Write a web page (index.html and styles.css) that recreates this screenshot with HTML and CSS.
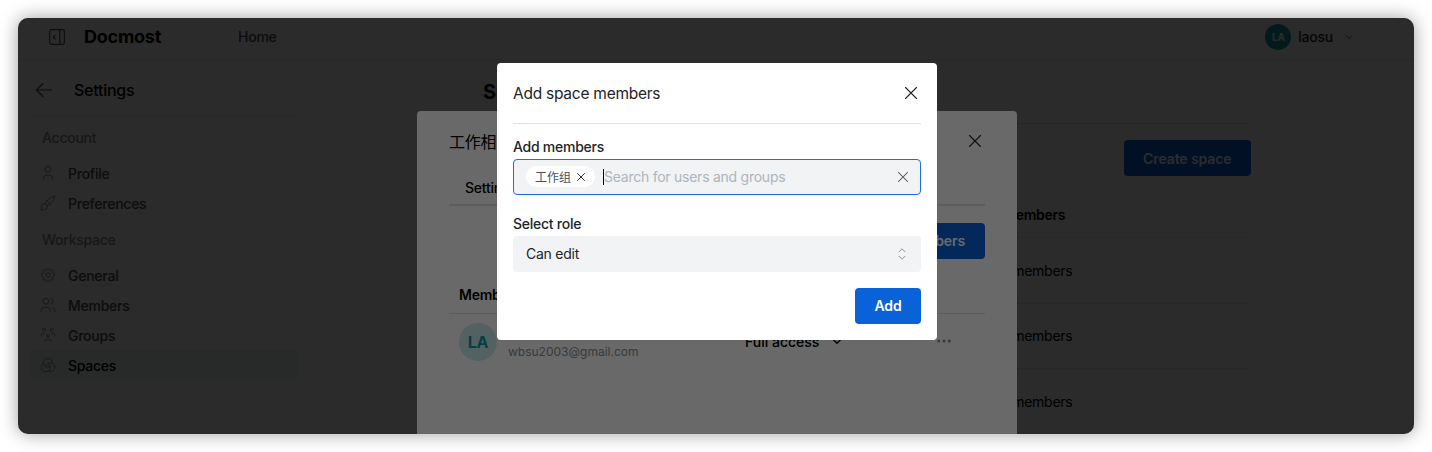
FILE: index.html
```html
<!DOCTYPE html>
<html lang="en">
<head>
<meta charset="utf-8">
<title>Docmost</title>
<link rel="stylesheet" href="styles.css">
</head>
<body>
<svg class="defs" aria-hidden="true">
  <symbol id="i-x" viewBox="0 0 24 24"><path d="M18 6L6 18M6 6l12 12"/></symbol>
  <symbol id="i-down" viewBox="0 0 24 24"><path d="M6 9l6 6l6 -6"/></symbol>
  <symbol id="i-sel" viewBox="0 0 24 24"><path d="M8 9l4 -4l4 4M16 15l-4 4l-4 -4"/></symbol>
  <symbol id="i-side" viewBox="0 0 24 24"><path d="M4 6a2 2 0 0 1 2 -2h12a2 2 0 0 1 2 2v12a2 2 0 0 1 -2 2h-12a2 2 0 0 1 -2 -2zM15 4v16M10 10l-2 2l2 2"/></symbol>
  <symbol id="i-back" viewBox="0 0 24 24"><path d="M5 12h14M5 12l6 6M5 12l6 -6"/></symbol>
  <symbol id="i-user" viewBox="0 0 24 24"><path d="M8 7a4 4 0 1 0 8 0a4 4 0 0 0 -8 0M6 21v-2a4 4 0 0 1 4 -4h4a4 4 0 0 1 4 4v2"/></symbol>
  <symbol id="i-brush" viewBox="0 0 24 24"><path d="M3 21v-4a4 4 0 1 1 4 4h-4M21 3a16 16 0 0 0 -12.8 10.2M21 3a16 16 0 0 1 -10.2 12.8M10.6 9a9 9 0 0 1 4.4 4.4"/></symbol>
  <symbol id="i-gear" viewBox="0 0 24 24"><path d="M10.325 4.317c.426 -1.756 2.924 -1.756 3.35 0a1.724 1.724 0 0 0 2.573 1.066c1.543 -.94 3.31 .826 2.37 2.37a1.724 1.724 0 0 0 1.065 2.572c1.756 .426 1.756 2.924 0 3.35a1.724 1.724 0 0 0 -1.066 2.573c.94 1.543 -.826 3.31 -2.37 2.37a1.724 1.724 0 0 0 -2.572 1.065c-.426 1.756 -2.924 1.756 -3.35 0a1.724 1.724 0 0 0 -2.573 -1.066c-1.543 .94 -3.31 -.826 -2.37 -2.37a1.724 1.724 0 0 0 -1.065 -2.572c-1.756 -.426 -1.756 -2.924 0 -3.35a1.724 1.724 0 0 0 1.066 -2.573c-.94 -1.543 .826 -3.31 2.37 -2.37c1 .608 2.296 .07 2.572 -1.065zM9 12a3 3 0 1 0 6 0a3 3 0 0 0 -6 0"/></symbol>
  <symbol id="i-users" viewBox="0 0 24 24"><path d="M5 7a4 4 0 1 0 8 0a4 4 0 1 0 -8 0M3 21v-2a4 4 0 0 1 4 -4h4a4 4 0 0 1 4 4v2M16 3.13a4 4 0 0 1 0 7.75M21 21v-2a4 4 0 0 0 -3 -3.85"/></symbol>
  <symbol id="i-group" viewBox="0 0 24 24"><path d="M10 13a2 2 0 1 0 4 0a2 2 0 0 0 -4 0M8 21v-1a2 2 0 0 1 2 -2h4a2 2 0 0 1 2 2v1M15 5a2 2 0 1 0 4 0a2 2 0 0 0 -4 0M17 10h2a2 2 0 0 1 2 2v1M5 5a2 2 0 1 0 4 0a2 2 0 0 0 -4 0M3 13v-1a2 2 0 0 1 2 -2h2"/></symbol>
  <symbol id="i-spaces" viewBox="0 0 24 24"><path d="M6.045 9.777a6 6 0 1 0 5.951 .023M11.997 20.196a6 6 0 1 0 -2.948 -5.97M17.95 9.785q .05 -.386 .05 -.785a6 6 0 1 0 -3.056 5.23"/></symbol>
  <symbol id="i-dots" viewBox="0 0 24 24"><path d="M4 12a1 1 0 1 0 2 0a1 1 0 1 0 -2 0M11 12a1 1 0 1 0 2 0a1 1 0 1 0 -2 0M18 12a1 1 0 1 0 2 0a1 1 0 1 0 -2 0"/></symbol>
</svg>

<div class="window">
  <header class="topbar">
    <div class="topbar-left">
      <svg class="ico ico-side"><use href="#i-side"/></svg>
      <span class="logo">Docmost</span>
      <a class="home">Home</a>
    </div>
    <div class="usermenu">
      <span class="avatar-sm">LA</span>
      <span class="username">laosu</span>
      <svg class="ico ico-caret"><use href="#i-down"/></svg>
    </div>
  </header>

  <div class="body">
    <aside class="sidebar">
      <div class="side-head">
        <svg class="ico ico-back"><use href="#i-back"/></svg>
        <span class="side-title">Settings</span>
      </div>
      <div class="side-group">Account</div>
      <nav class="side-list">
        <a class="side-item"><svg class="ico ico-nav"><use href="#i-user"/></svg>Profile</a>
        <a class="side-item"><svg class="ico ico-nav"><use href="#i-brush"/></svg>Preferences</a>
      </nav>
      <div class="side-group">Workspace</div>
      <nav class="side-list">
        <a class="side-item"><svg class="ico ico-nav"><use href="#i-gear"/></svg>General</a>
        <a class="side-item"><svg class="ico ico-nav"><use href="#i-users"/></svg>Members</a>
        <a class="side-item"><svg class="ico ico-nav"><use href="#i-group"/></svg>Groups</a>
        <a class="side-item active"><svg class="ico ico-nav"><use href="#i-spaces"/></svg>Spaces</a>
      </nav>
    </aside>

    <main class="main">
      <h1 class="page-title">Spaces</h1>
      <div class="page-actions"><button class="btn btn-create">Create space</button></div>
      <div class="space-table">
        <div class="space-row space-head"><span>Space</span><span class="col-members">Members</span></div>
        <div class="space-row"><span>工作相关</span><span class="col-members">1 members</span></div>
        <div class="space-row"><span>General</span><span class="col-members">1 members</span></div>
        <div class="space-row"><span>Personal</span><span class="col-members">1 members</span></div>
      </div>
    </main>
  </div>

  <div class="layer layer-settings">
    <section class="modal modal-settings">
      <div class="ms-head">
        <span class="ms-title">工作相关</span>
        <svg class="ico ico-close"><use href="#i-x"/></svg>
      </div>
      <div class="tabs"><span class="tab">Settings</span><span class="tab">Members</span></div>
      <div class="ms-actions"><button class="btn btn-addm">Add space members</button></div>
      <div class="mtable-head">Member</div>
      <div class="mrow">
        <span class="avatar-lg">LA</span>
        <div class="mrow-id">
          <span class="mrow-name">laosu</span>
          <span class="mrow-mail">wbsu2003@gmail.com</span>
        </div>
        <div class="mrow-role">Full access<svg class="ico ico-role"><use href="#i-down"/></svg></div>
        <svg class="ico ico-dots"><use href="#i-dots"/></svg>
      </div>
    </section>
  </div>

  <div class="layer layer-add">
    <section class="modal modal-add">
      <div class="ma-head">
        <span class="ma-title">Add space members</span>
        <svg class="ico ico-close"><use href="#i-x"/></svg>
      </div>
      <div class="ma-rule"></div>
      <label class="field-label">Add members</label>
      <div class="multi">
        <span class="pill">工作组<svg class="ico ico-pillx"><use href="#i-x"/></svg></span>
        <span class="caret"></span>
        <span class="placeholder">Search for users and groups</span>
        <svg class="ico ico-clear"><use href="#i-x"/></svg>
      </div>
      <label class="field-label field-role">Select role</label>
      <div class="select">
        <span>Can edit</span>
        <svg class="ico ico-sel"><use href="#i-sel"/></svg>
      </div>
      <div class="ma-foot"><button class="btn btn-add">Add</button></div>
    </section>
  </div>
</div>
</body>
</html>
```

FILE: styles.css
```css
* { box-sizing: border-box; }

html, body { margin: 0; height: 100%; }

body {
  padding: 18px;
  background: #fff;
  color: #000;
  font-family: Inter, "Noto Sans CJK SC", sans-serif;
  font-size: 14px;
  letter-spacing: -.25px;
  overflow: hidden;
}

.defs { display: none; }

.ico {
  display: block;
  flex: none;
  fill: none;
  stroke: currentColor;
  stroke-width: 1.5;
  stroke-linecap: round;
  stroke-linejoin: round;
}

.window {
  position: relative;
  width: 1396px;
  height: 416px;
  border-radius: 10px;
  overflow: hidden;
  background: #fff;
  box-shadow: 0 0 18px rgba(0, 0, 0, .38);
  display: flex;
  flex-direction: column;
}

/* top bar */
.topbar {
  flex: none;
  height: 42px;
  padding: 0 24px 4px 30px;
  border-bottom: 1px solid #e9ecef;
  display: flex;
  justify-content: space-between;
  align-items: center;
}

.topbar-left { display: flex; align-items: center; }

.ico-side { width: 22px; height: 22px; margin-left: -2px; color: #495057; stroke-width: 1.25; }

.logo {
  margin-left: 16px;
  font-size: 18px;
  font-weight: 700;
  width: 154px;
}

.home { font-size: 14px; font-weight: 500; color: #495057; }

.usermenu { display: flex; align-items: center; margin-right: 35px; }

.avatar-sm {
  width: 26px;
  height: 26px;
  border-radius: 50%;
  background: #099aa5;
  color: #fff;
  font-size: 10px;
  font-weight: 700;
  display: flex;
  align-items: center;
  justify-content: center;
}

.username { margin-left: 7px; font-size: 14px; font-weight: 500; color: #212529; }

.ico-caret { width: 12px; height: 12px; margin-left: 10px; color: #495057; }

/* body */
.body { flex: 1; display: flex; min-height: 0; }

.sidebar {
  flex: none;
  width: 293px;
  padding: 0 12px;
  background: #fcfcfc;
  border-right: 1px solid #f1f3f5;
}

.side-head {
  height: 57px;
  padding: 4px 6px 0;
  display: flex;
  align-items: center;
  border-bottom: 1px solid #e9ecef;
}

.ico-back { width: 26px; height: 26px; margin-left: -5px; color: #495057; stroke-width: 1.1; }

.side-title { margin-left: 17px; font-size: 16px; font-weight: 500; }

.side-group {
  padding-left: 12px;
  font-size: 14px;
  font-weight: 500;
  color: #868e96;
  margin-top: 12px;
  height: 18px;
  line-height: 18px;
}

.side-list { margin-top: 11px; margin-bottom: 13px; }

.side-item {
  height: 30px;
  padding-left: 9px;
  display: flex;
  align-items: center;
  font-size: 14px;
  font-weight: 500;
  color: #495057;
  border-radius: 4px;
}

.side-item.active { background: #f1f3f5; color: #000; }

.ico-nav { width: 18px; height: 18px; margin-right: 11px; color: #868e96; stroke-width: 1.25; }

/* main */
.main { flex: 1; padding: 0 163px 0 172px; }

.page-title {
  margin: 0;
  height: 64px;
  padding-top: 20px;
  font-size: 20px;
  line-height: 24px;
  font-weight: 700;
  border-bottom: 1px solid #dee2e6;
}

.page-actions { display: flex; justify-content: flex-end; padding-top: 16px; }

.btn {
  height: 36px;
  padding: 0 19px;
  border: 0;
  border-radius: 4px;
  background: #0a62d8;
  color: #fff;
  font-family: inherit;
  font-size: 14px;
  font-weight: 600;
  letter-spacing: -.1px;
  white-space: nowrap;
}

.btn-create { padding: 0 19.5px; }

.space-table { margin-top: 21px; }

.space-row {
  height: 65.5px;
  display: flex;
  align-items: center;
  border-bottom: 1px solid #e9ecef;
  padding-left: 10px;
}

.space-head { height: 41px; padding-bottom: 6px; font-weight: 600; }

.col-members { margin-left: auto; width: 248px; }

/* overlays */
.layer {
  position: absolute;
  inset: 0;
  padding-left: 2px;
  background: rgba(0, 0, 0, .59);
  display: flex;
  justify-content: center;
  align-items: flex-start;
}

.modal { background: #fff; border-radius: 4px; flex: none; }

.modal-settings {
  width: 600px;
  height: 400px;
  margin-top: 93px;
  padding: 0 32px;
}

.ms-head {
  height: 60px;
  display: flex;
  justify-content: space-between;
  align-items: center;
}

.ms-title { font-size: 16px; }

.ico-close { width: 22px; height: 22px; margin-right: -1px; color: #212529; stroke-width: 1.2; }

.tabs {
  height: 35px;
  display: flex;
  gap: 20px;
  padding-left: 16px;
  border-bottom: 2px solid #dee2e6;
}

.tab { line-height: 34px; font-weight: 500; }

.ms-actions { display: flex; justify-content: flex-end; padding-top: 17px; }

.btn-addm { padding: 0 20px 1px 19px; }

.mtable-head {
  margin-top: 17px;
  height: 38px;
  padding: 10px 10px 0;
  font-weight: 600;
  line-height: 18px;
  border-bottom: 1px solid #dee2e6;
}

.mrow {
  display: flex;
  align-items: center;
  padding: 9px 10px;
}

.avatar-lg {
  width: 38px;
  height: 38px;
  border-radius: 50%;
  background: #cdebee;
  color: #099aa5;
  font-size: 16px;
  font-weight: 700;
  display: flex;
  align-items: center;
  justify-content: center;
}

.mrow-id {
  margin-left: 11px;
  width: 237px;
  display: flex;
  flex-direction: column;
}

.mrow-name { font-weight: 500; line-height: 20px; }

.mrow-mail { font-size: 12px; line-height: 18px; color: #868e96; letter-spacing: 0; }

.mrow-role {
  display: flex;
  align-items: center;
  gap: 9px;
  font-weight: 500;
  letter-spacing: 0;
  margin-top: -2px;
  width: 190px;
}

.ico-role { width: 18px; height: 18px; stroke-width: 2; }

.ico-dots { width: 18px; height: 18px; color: #868e96; stroke-width: 2; margin-top: -2px; }

.modal-add {
  width: 440px;
  margin-top: 45px;
  padding: 0 16px 16px;
  height: 277px;
}

.ma-head {
  height: 60px;
  display: flex;
  justify-content: space-between;
  align-items: center;
}

.ma-title { font-size: 15.5px; color: #212529; }

.ma-rule { height: 1px; background: #dee2e6; }

.field-label {
  display: block;
  margin-top: 14px;
  height: 21px;
  line-height: 18px;
  font-weight: 500;
  color: #212529;
}

.field-role { margin-top: 20px; }

.multi {
  height: 36px;
  border: 1px solid #1c6ee8;
  border-radius: 4px;
  background: #f1f3f5;
  padding: 0 8px 1px 12px;
  display: flex;
  align-items: center;
}

.pill {
  height: 21px;
  padding: 0 7px 0 9px;
  border-radius: 11px;
  background: #fff;
  display: flex;
  align-items: center;
  font-size: 12px;
  letter-spacing: 0;
  color: #495057;
}

.ico-pillx { width: 14px; height: 14px; margin-left: 3px; color: #212529; stroke-width: 1.6; }

.caret { width: 1px; height: 16px; margin-left: 8px; background: #000; }

.placeholder { color: #adb5bd; flex: 1; }

.ico-clear { width: 18px; height: 18px; color: #495057; stroke-width: 1.4; }

.select {
  height: 36px;
  border-radius: 4px;
  background: #f1f3f5;
  padding: 0 10px 1px 13px;
  display: flex;
  justify-content: space-between;
  align-items: center;
  color: #212529;
}

.ico-sel { width: 18px; height: 18px; color: #868e96; stroke-width: 1.25; }

.ma-foot { display: flex; justify-content: flex-end; margin-top: 16px; }

.btn-add { width: 66px; padding: 0 0 1px; }
```
